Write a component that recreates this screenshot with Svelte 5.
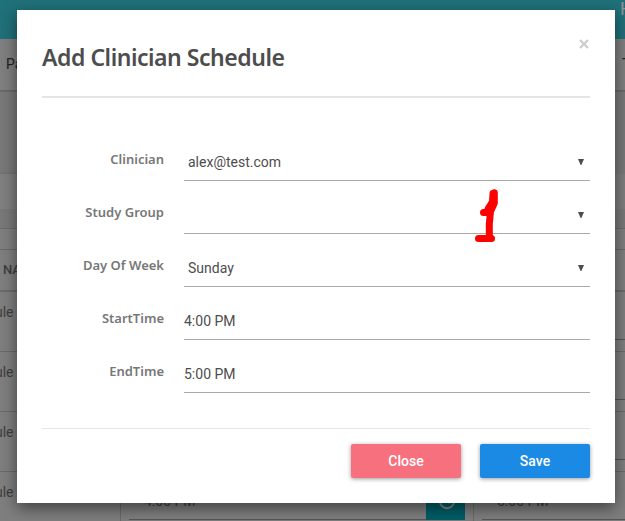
<script>
  const rows = [
    { label: 'Clinician', value: 'alex@test.com', select: true },
    { label: 'Study Group', value: '', select: true },
    { label: 'Day Of Week', value: 'Sunday', select: true },
    { label: 'StartTime', value: '4:00 PM' },
    { label: 'EndTime', value: '5:00 PM' }
  ];
  const tableRows = [0, 1, 2, 3];
</script>

<div class="screen">
  <div class="page">
    <header><span>H</span></header>
    <nav><span>Pa</span><span class="right">T</span></nav>
    <div class="space"></div>
    <div class="card"></div>
    <div class="gap"></div>
    <div class="filter"></div>
    <div class="thead">NAME</div>
    {#each tableRows as row}
      <div class="trow">
        <div class="name"><span>ule</span></div>
        <div class="cell">
          <div class="time">4:00 PM</div>
          <div class="clock">
            <svg width="18" height="18" viewBox="0 0 18 18"><circle cx="9" cy="9" r="7.2" /><path d="M9 4v5l3 2" /></svg>
          </div>
        </div>
        <div class="cell last"><div class="time">5:00 PM</div></div>
      </div>
    {/each}
  </div>

  <div class="modal">
    <div class="head">
      <h1>Add Clinician Schedule</h1>
      <button class="x" aria-label="Close dialog">
        <svg width="10" height="10" viewBox="0 0 10 10"><path d="M1 1l8 8M9 1l-8 8" /></svg>
      </button>
    </div>
    <div class="form">
      {#each rows as r}
        <div class="row">
          <div class="label">{r.label}</div>
          <div class="field" class:select={r.select}>
            <span>{r.value}</span>
            {#if r.select}
              <svg width="6" height="6" viewBox="0 0 6 6"><path d="M0 0h6L3.4 6h-.8z" /></svg>
            {/if}
          </div>
        </div>
      {/each}
    </div>
    <div class="foot">
      <button class="btn close">Close</button>
      <button class="btn save">Save</button>
    </div>
  </div>

  <svg class="mark" width="26" height="58" viewBox="0 0 26 58">
    <path d="M19.300 5.800V16L15.500 24.500 14.300 37V51M18 6.500L17.500 15 13 22v3.500H8.500M3.500 51.500H16.500" />
  </svg>
</div>

<style>
  .screen {
    position: relative;
    width: 625px;
    height: 521px;
    overflow: hidden;
    font-family: Roboto, "Liberation Sans", sans-serif;
  }
  .page {
    background: #7f7f7f;
    color: #3e3e3e;
    font-size: 14px;
  }
  .page > * { box-sizing: border-box; }
  header {
    height: 39px;
    background: #20717a;
    color: #929292;
    font-size: 18px;
    line-height: 17px;
    padding-left: 620px;
    overflow: hidden;
  }
  nav {
    display: flex;
    justify-content: space-between;
    height: 52px;
    padding: 0 0 0 6px;
    line-height: 50px;
    color: #222;
    background: #808080;
    border-bottom: 1px solid #656565;
  }
  nav .right { width: 3px; overflow: hidden; }
  .space { height: 83px; background: #797979; border-top: 1px solid #6e6e6e; }
  .card { width: 50px; height: 35px; background: #808080; box-shadow: 0 1px 3px #555; }
  .gap { height: 19px; background: #797979; }
  .filter { height: 21px; border-top: 1px solid #6c6c6c; }
  .thead {
    height: 43px;
    padding-left: 3px;
    border-top: 1px solid #696969;
    border-bottom: 2px solid #6b6b6b;
    font-size: 13px;
    font-weight: 500;
    line-height: 40px;
  }
  .trow {
    display: flex;
    box-sizing: border-box;
    height: 60px;
    border-bottom: 1px solid #6b6b6b;
  }
  .name {
    width: 120px;
    height: 40px;
    line-height: 40px;
    flex: none;
    overflow: hidden;
  }
  .name span { margin-left: -5px; }
  .cell {
    display: flex;
    box-sizing: border-box;
    width: 353px;
    height: 59px;
    flex: none;
    padding: 15px 8px 0;
    border-left: 1px solid #6b6b6b;
  }
  .time {
    box-sizing: border-box;
    width: 297px;
    height: 33px;
    padding-left: 15px;
    line-height: 28px;
    border-bottom: 1px solid #555;
    flex: none;
  }
  .last { overflow: hidden; width: 152px; }
  .clock {
    width: 39px;
    height: 33px;
    background: #005e68;
    display: flex;
    justify-content: center;
    align-items: center;
  }
  .clock svg {
    fill: none;
    stroke: #858585;
    stroke-width: 2;
    margin-bottom: 6px;
    margin-left: 3px;
  }
  .modal {
    position: absolute;
    left: 17px;
    top: 10px;
    box-sizing: border-box;
    width: 598px;
    height: 493px;
    padding: 0 25px;
    background: #fff;
    box-shadow: 0 5px 15px rgba(0, 0, 0, .5);
    display: flex;
    flex-direction: column;
  }
  .head {
    display: flex;
    justify-content: space-between;
    box-sizing: border-box;
    height: 88px;
    border-bottom: 2px solid #e5e5e5;
  }
  h1 {
    margin: 31px 0 0;
    font: 600 23px/32px "Noto Sans", sans-serif;
    letter-spacing: -.46px;
    color: #4d4d4d;
    white-space: nowrap;
  }
  .x {
    width: 10px;
    height: 10px;
    padding: 0;
    margin: 29px 1px 0 0;
    border: 0;
    background: none;
  }
  .x svg { display: block; fill: none; stroke: #ccc; stroke-width: 2.2; }
  .form { height: 320px; padding-top: 46px; box-sizing: border-box; }
  .row { display: flex; height: 53px; }
  .label {
    width: 122px;
    margin-right: 20px;
    text-align: right;
    font: 600 13px/30px "Noto Sans", sans-serif;
    color: #777;
    white-space: nowrap;
  }
  .field {
    display: flex;
    justify-content: space-between;
    align-items: center;
    box-sizing: border-box;
    width: 406px;
    height: 37px;
    padding-bottom: 1px;
    border-bottom: 1px solid #a9a9a9;
    color: #4d4d4d;
    font-size: 14px;
  }
  .field.select { padding: 0 6px 1px 4px; }
  .field path { fill: #4d4d4d; }
  .foot {
    display: flex;
    justify-content: flex-end;
    gap: 19px;
    margin-top: 10px;
    padding-top: 15px;
    border-top: 1px solid #e5e5e5;
  }
  .btn {
    width: 110px;
    height: 34px;
    padding: 0;
    border: 0;
    border-radius: 2px;
    color: #fff;
    font: 500 14px/33px Roboto, sans-serif;
    box-shadow: 0 1px 4px rgba(0, 0, 0, .4);
  }
  .close { background: #f6717d; }
  .save { background: #1b8ae4; }
  .mark {
    position: absolute;
    left: 475px;
    top: 187px;
    fill: none;
    stroke: #f00;
    stroke-width: 7;
    stroke-linecap: round;
    stroke-linejoin: round;
  }
</style>
